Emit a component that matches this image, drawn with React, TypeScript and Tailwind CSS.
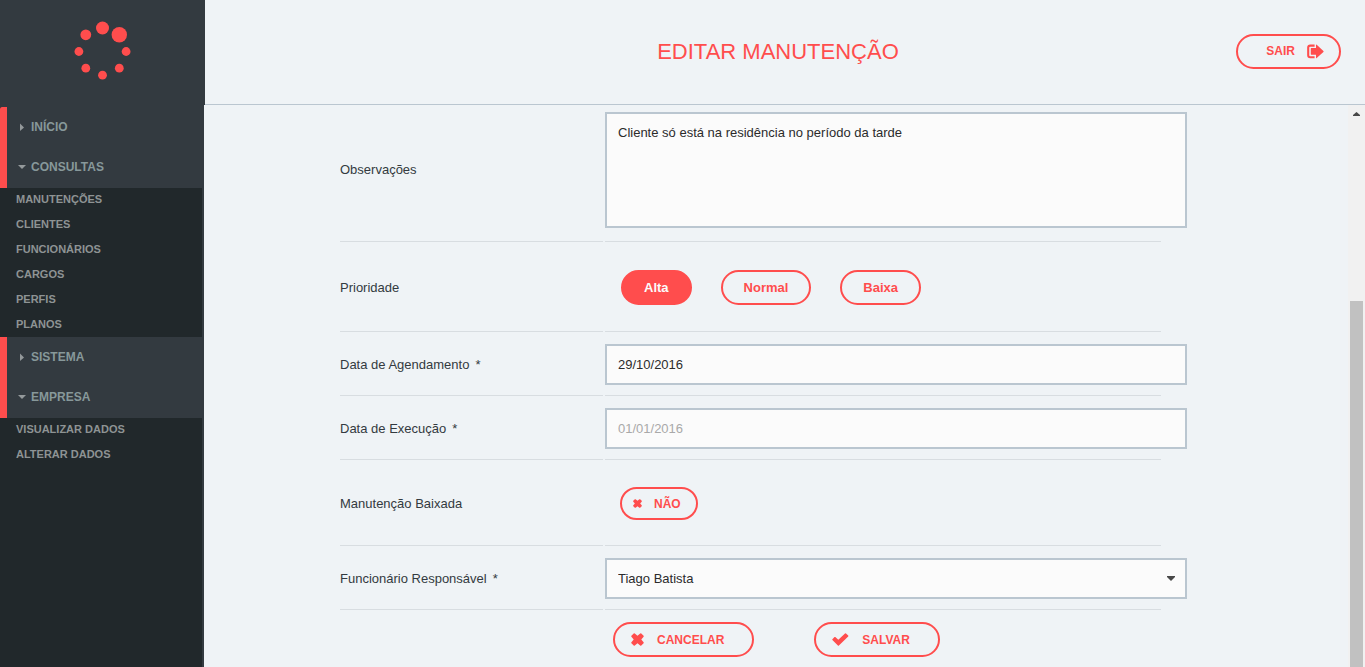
import { useState } from "react";
import type { ReactNode } from "react";

const PILL =
  "flex cursor-pointer items-center rounded-full border-2 border-[#ff4d4d] font-bold";

function Logo() {
  return (
    <svg width="58" height="60" viewBox="0 0 58 60" fill="#ff4d4d" aria-hidden="true">
      <circle cx="28.5" cy="7" r="6.5" />
      <circle cx="45.3" cy="13.8" r="7.7" />
      <circle cx="11.8" cy="13.8" r="5.4" />
      <circle cx="4.9" cy="30.5" r="4.4" />
      <circle cx="52.1" cy="30.5" r="4.4" />
      <circle cx="11.8" cy="47.2" r="4.4" />
      <circle cx="45.3" cy="47.2" r="4.4" />
      <circle cx="28.5" cy="54.2" r="4.4" />
    </svg>
  );
}

function LogOutIcon() {
  return (
    <svg width="17" height="15" viewBox="0 0 17 15" aria-hidden="true">
      <path d="M7.6 1.6H3.2Q1.2 1.6 1.2 3.6V11.2Q1.2 13.2 3.2 13.2H7.6" fill="none" stroke="#ff4d4d" strokeWidth="2.1" />
      <path
        d="M4.2 4.1H9V1.1Q9 .2 9.7 .8L16.4 6.9Q16.9 7.4 16.4 7.9L9.7 14Q9 14.6 9 13.7V10.7H4.2Q3.8 10.7 3.8 10.3V4.5Q3.8 4.1 4.2 4.1Z"
        fill="#ff4d4d"
      />
    </svg>
  );
}

function CrossIcon({ size }: { size: number }) {
  return (
    <svg width={size} height={size} viewBox="0 0 13 13" aria-hidden="true">
      <path
        d="M3.8 .4 6.5 2.7 9.2 .4Q9.8 0 10.3 .4L12.6 2.7Q13 3.2 12.6 3.8L10.3 6.5 12.6 9.2Q13 9.8 12.6 10.3L10.3 12.6Q9.8 13 9.2 12.6L6.5 10.3 3.8 12.6Q3.2 13 2.7 12.6L.4 10.3Q0 9.8 .4 9.2L2.7 6.5 .4 3.8Q0 3.2 .4 2.7L2.7 .4Q3.2 0 3.8 .4Z"
        fill="#ff4d4d"
      />
    </svg>
  );
}

function CheckIcon() {
  return (
    <svg width="17" height="13" viewBox="0 0 17 13" aria-hidden="true">
      <path
        d="M.4 6.2 2.5 4.1Q2.9 3.7 3.3 4.1L6.3 6.7 13 .4Q13.5 0 14 .4L16.2 2.6Q16.6 3 16.2 3.4L6.9 12.6Q6.4 13 5.9 12.6L.4 7.1Q0 6.6 .4 6.2Z"
        fill="#ff4d4d"
      />
    </svg>
  );
}

function MenuItem({ label, open }: { label: string; open: boolean }) {
  return (
    <button
      type="button"
      aria-expanded={open}
      className="flex h-10 w-full cursor-pointer items-center gap-[5px] pl-[11px] text-left text-xs font-bold text-[#87989a]"
    >
      <svg width="8" height="8" viewBox="0 0 8 8" fill="#94999b" aria-hidden="true" className="shrink-0">
        {open ? <path d="M0 2H8L4 6Z" /> : <path d="M2 0.5V8L6 4.5Z" />}
      </svg>
      {label}
    </button>
  );
}

function MenuGroup({
  items,
  links,
  rounded,
}: {
  items: { label: string; open: boolean }[];
  links: string[];
  rounded?: boolean;
}) {
  return (
    <>
      <div className={`border-l-7 border-[#ff4d4d] bg-[#333a40] pb-px ${rounded ? "rounded-tl-xs" : ""}`}>
        {items.map((item) => (
          <MenuItem key={item.label} label={item.label} open={item.open} />
        ))}
      </div>
      <ul className="flex flex-col gap-0.5 pb-px">
        {links.map((link) => (
          <li key={link}>
            <a href="#" className="block pl-4 text-[11px] leading-[23px] font-bold text-[#8e9394]">
              {link}
            </a>
          </li>
        ))}
      </ul>
    </>
  );
}

function Row({
  label,
  id,
  required,
  pad,
  children,
}: {
  label: string;
  id?: string;
  required?: boolean;
  pad: string;
  children: ReactNode;
}) {
  return (
    <div className="grid grid-cols-[263px_minmax(0,1fr)] gap-x-0.5">
      <div className={`flex items-center border-b border-[#d8dde1] ${pad}`}>
        <label htmlFor={id}>
          {label}
          {required && <span className="ml-1.5">*</span>}
        </label>
      </div>
      <div className={`border-b border-[#d8dde1] ${pad}`}>{children}</div>
    </div>
  );
}

const FIELD =
  "block w-[calc(100%+26px)] rounded-none border-2 border-[#bac6d0] bg-[#fbfbfb] px-[11px] text-[#2b2b2b] outline-none";

export default function App() {
  const [priority, setPriority] = useState("Alta");
  const [done, setDone] = useState(false);

  return (
    <div className="flex min-h-screen flex-col bg-[#eff3f6] font-['Liberation_Sans',Arial,sans-serif] text-[13px] text-[#333a40]">
      <div className="flex">
        <div className="flex h-[105px] w-[205px] shrink-0 justify-center bg-[#333a40] pt-[21px]">
          <Logo />
        </div>
        <header className="grid h-[105px] flex-1 grid-cols-[1fr_auto_1fr] items-center border-b border-[#bac6d0] pr-6 pb-0.5 pl-2.5">
          <h1 className="col-start-2 text-[22px] text-[#ff4d4d]">EDITAR MANUTENÇÃO</h1>
          <button type="button" className={`${PILL} h-[35px] gap-3 justify-self-end pr-[15px] pl-7 text-xs text-[#ff4d4d]`}>
            SAIR
            <LogOutIcon />
          </button>
        </header>
      </div>

      <div className="flex flex-1">
        <nav className="w-[204px] shrink-0 border-r-2 border-[#333a40] bg-[#21282b]">
          <div className="h-0.5 bg-[#333a40]" />
          <MenuGroup
            rounded
            items={[
              { label: "INÍCIO", open: false },
              { label: "CONSULTAS", open: true },
            ]}
            links={["MANUTENÇÕES", "CLIENTES", "FUNCIONÁRIOS", "CARGOS", "PERFIS", "PLANOS"]}
          />
          <MenuGroup
            items={[
              { label: "SISTEMA", open: false },
              { label: "EMPRESA", open: true },
            ]}
            links={["VISUALIZAR DADOS", "ALTERAR DADOS"]}
          />
        </nav>

        <main className="min-w-0 flex-1">
          <form className="mx-auto max-w-[872px] pr-[51px]" onSubmit={(e) => e.preventDefault()}>
            <Row label="Observações" id="observacoes" pad="pt-[7px] pb-[13px]">
              <textarea
                id="observacoes"
                className={`${FIELD} h-[116px] resize-none py-2.5 leading-[18px]`}
                defaultValue="Cliente só está na residência no período da tarde"
              />
            </Row>

            <Row label="Prioridade" pad="pt-7 pb-[26px]">
              <div role="group" aria-label="Prioridade" className="flex gap-[29px] pl-4">
                {["Alta", "Normal", "Baixa"].map((name) => (
                  <button
                    key={name}
                    type="button"
                    aria-pressed={priority === name}
                    onClick={() => setPriority(name)}
                    className={`${PILL} h-[35px] px-[21px] ${
                      priority === name ? "bg-[#ff4d4d] text-[#fbfbfb]" : "text-[#ff4d4d]"
                    }`}
                  >
                    {name}
                  </button>
                ))}
              </div>
            </Row>

            <Row label="Data de Agendamento" id="agendamento" required pad="pt-3 pb-2.5">
              <input id="agendamento" type="text" className={`${FIELD} h-[41px]`} defaultValue="29/10/2016" />
            </Row>

            <Row label="Data de Execução" id="execucao" required pad="pt-3 pb-2.5">
              <input
                id="execucao"
                type="text"
                className={`${FIELD} h-[41px] placeholder:text-[#a9a9a9]`}
                placeholder="01/01/2016"
              />
            </Row>

            <Row label="Manutenção Baixada" id="baixada" pad="pt-[27px] pb-[25px]">
              <div className="flex pl-[15px]">
                <button
                  id="baixada"
                  type="button"
                  aria-pressed={done}
                  onClick={() => setDone(!done)}
                  className={`${PILL} h-[33px] gap-3 pr-[15px] pl-[11px] text-xs text-[#ff4d4d]`}
                >
                  <CrossIcon size={9} />
                  {done ? "SIM" : "NÃO"}
                </button>
              </div>
            </Row>

            <Row label="Funcionário Responsável" id="funcionario" required pad="pt-3 pb-2.5">
              <div className="relative w-[calc(100%+26px)]">
                <select
                  id="funcionario"
                  defaultValue="Tiago Batista"
                  className="block h-[41px] w-full appearance-none rounded-none border-2 border-[#bac6d0] bg-[#fbfbfb] px-[11px] text-[#2b2b2b] outline-none"
                >
                  <option>Tiago Batista</option>
                </select>
                <svg
                  width="8"
                  height="5"
                  viewBox="0 0 8 5"
                  fill="#484848"
                  aria-hidden="true"
                  className="pointer-events-none absolute top-[18px] right-3"
                >
                  <path d="M0 0H8V1L4 5L0 1Z" />
                </svg>
              </div>
            </Row>

            <div className="flex gap-[60px] pt-3 pb-2.5 pl-[273px]">
              <button type="button" className={`${PILL} h-[35px] gap-[13px] pr-7 pl-4 text-xs text-[#ff4d4d]`}>
                <CrossIcon size={13} />
                CANCELAR
              </button>
              <button type="submit" className={`${PILL} h-[35px] gap-[13px] pr-7 pl-4 text-xs text-[#ff4d4d]`}>
                <CheckIcon />
                SALVAR
              </button>
            </div>
          </form>
        </main>

        <div aria-hidden="true" className="flex w-[17px] shrink-0 flex-col items-center bg-[#f1f1f1]">
          <div className="flex h-[17px] items-center">
            <svg width="7" height="4" viewBox="0 0 7 4" fill="#484848">
              <path d="M0 4V3L3.5 0L7 3V4Z" />
            </svg>
          </div>
          <div className="h-[179px]" />
          <div className="w-[13px] flex-1 bg-[#c1c1c1]" />
        </div>
      </div>
    </div>
  );
}
